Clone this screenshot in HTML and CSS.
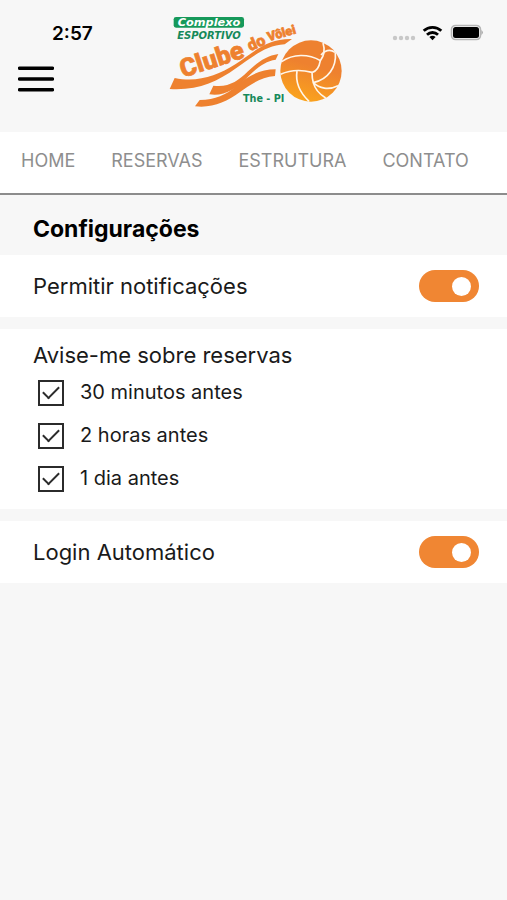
FILE: index.html
```
<!DOCTYPE html>
<html lang="pt-BR">
<head>
    <meta charset="UTF-8">
    <meta name="viewport" content="width=device-width, initial-scale=1.0">
    <title>Configurações</title>
    <link rel="stylesheet" href="styles.css">
</head>
<body>
    <header class="topo">
        <div class="lado">
            <span class="hora">2:57</span>
            <button type="button" class="menu" aria-label="Abrir menu">
                <svg width="36" height="26" viewBox="0 0 36 26">
                    <path d="M1.5 2.2H34.5M1.5 13H34.5M1.5 23.8H34.5" stroke="#000" stroke-width="3.4" stroke-linecap="round"/>
                </svg>
            </button>
        </div>

        <svg class="logo" width="190" height="105" viewBox="-4 0 570 315" role="img" aria-label="Complexo Esportivo Clube do Vôlei">
            <defs>
                <linearGradient id="bola" x1="0.6" y1="0" x2="0.3" y2="1">
                    <stop offset="0.4" stop-color="#ee812f"/>
                    <stop offset="1" stop-color="#fba51c"/>
                </linearGradient>
            </defs>
            <rect x="40" y="21" width="211" height="32" rx="7" fill="#16995a"/>
            <text class="complexo" x="146" y="48" text-anchor="middle">Complexo</text>
            <text class="esportivo" x="146" y="88" text-anchor="middle">ESPORTIVO</text>
            <g class="clube">
                <text x="0" y="0" font-size="76" transform="translate(68 203) rotate(-18)">Clube</text>
                <text x="0" y="0" font-size="48" transform="translate(270 124) rotate(-24)">do</text>
                <text x="0" y="0" font-size="38" transform="translate(325 94) rotate(-16)">Vôlei</text>
            </g>
            <g fill="#ee812f">
                <path d="M43 204C112 218 170 198 225 163C280 126 320 85 395 87L373 103C315 106 275 142 228 174C168 217 112 242 28 237Z"/>
                <path d="M159 227C205 233 232 214 263 184C290 158 318 137 354 132L346 149C312 154 286 176 259 204C226 238 190 260 147 253Z"/>
                <path d="M118 270C166 269 196 255 229 227C263 197 299 178 346 178L344 198C302 201 269 224 238 247C199 276 156 295 104 289Z"/>
            </g>
            <text class="the" x="310" y="276" text-anchor="middle">The - PI</text>
            <circle cx="452" cy="183" r="92" fill="url(#bola)"/>
            <g fill="none" stroke="#fff6ea" stroke-width="5">
                <path d="M488 99C494 118 490 139 480 152C476 174 468 184 456 187"/>
                <path d="M364 155C399 131 443 131 481 152"/>
                <path d="M525 127C529 171 504 208 459 218"/>
                <path d="M482 135C500 115 515 121 524 127"/>
                <path d="M361 193C391 179 427 180 455 187C455 196 456 208 459 218C477 236 505 241 533 227"/>
                <path d="M410 183C405 215 419 248 446 274"/>
                <path d="M459 218C464 238 478 253 496 264"/>
            </g>
        </svg>

        <div class="lado sinais">
            <svg width="92" height="18" viewBox="0 0 92 18" role="img" aria-label="Wi-Fi e bateria">
                <g fill="#c8c8c8">
                    <circle cx="4" cy="14" r="2.2"/>
                    <circle cx="10" cy="14" r="2.2"/>
                    <circle cx="16" cy="14" r="2.2"/>
                    <circle cx="22" cy="14" r="2.2"/>
                </g>
                <g fill="none" stroke="#000" stroke-width="2.8">
                    <path d="M32.7 6.8A13 13 0 0 1 50.3 6.8"/>
                    <path d="M36 10.7A8 8 0 0 1 47 10.7"/>
                </g>
                <path d="M38.4 13.1A4.8 4.8 0 0 1 44.6 13.1L41.5 16.2Z"/>
                <rect x="60.5" y="1.5" width="29" height="14" rx="4" fill="#f7f7f7" stroke="#b5b5b5" stroke-width="1.6"/>
                <rect x="62" y="3" width="26" height="11" rx="2.5"/>
                <path d="M90.5 6Q93 8.5 90.5 11Z" fill="#999"/>
            </svg>
        </div>
    </header>

    <nav class="abas">
        <a href="#home">HOME</a>
        <a href="#reservas">RESERVAS</a>
        <a href="#estrutura">ESTRUTURA</a>
        <a href="#contato">CONTATO</a>
    </nav>

    <main>
        <h1>Configurações</h1>

        <section class="cartao linha">
            <label for="notificacoes">Permitir notificações</label>
            <input type="checkbox" class="chave" id="notificacoes" checked>
        </section>

        <section class="cartao">
            <h2>Avise-me sobre reservas</h2>
            <ul class="avisos">
                <li><input type="checkbox" id="aviso-30" checked><label for="aviso-30">30 minutos antes</label></li>
                <li><input type="checkbox" id="aviso-2h" checked><label for="aviso-2h">2 horas antes</label></li>
                <li><input type="checkbox" id="aviso-1d" checked><label for="aviso-1d">1 dia antes</label></li>
            </ul>
        </section>

        <section class="cartao linha">
            <label for="login">Login Automático</label>
            <input type="checkbox" class="chave" id="login" checked>
        </section>
    </main>
</body>
</html>
```
FILE: styles.css
```
* {
    box-sizing: border-box;
}
body {
    margin: 0;
    font-family: Inter, "Liberation Sans", sans-serif;
    font-size: 22px;
    line-height: 28px;
    color: #1a1a1a;
    background-color: #f7f7f7;
}

/* topo */
.topo {
    display: flex;
    justify-content: space-between;
    height: 132px;
    padding: 10px 18px 0;
}
.lado {
    flex: 1 1 0;
    display: flex;
    flex-direction: column;
    align-items: flex-start;
    gap: 18px;
    padding-top: 10px;
}
.hora {
    padding-left: 34px;
    font-size: 19px;
    font-weight: 600;
    color: #000;
}
.menu {
    padding: 0;
    border: none;
    background: none;
    cursor: pointer;
}
.menu svg,
.logo {
    display: block;
}
.logo {
    flex: none;
}
.sinais {
    align-items: flex-end;
    padding-top: 14px;
}
.sinais svg {
    margin-right: 6px;
}
.complexo,
.esportivo {
    font-family: "DejaVu Sans", sans-serif;
    font-weight: bold;
    font-style: italic;
}
.complexo {
    font-size: 34px;
    fill: #fff;
}
.esportivo {
    font-size: 30px;
    fill: #16895a;
}
.clube {
    font-family: Roboto, sans-serif;
    font-weight: 900;
    fill: #ee812f;
    stroke: #ee812f;
    stroke-width: 2;
}
.the {
    font-family: "DejaVu Sans", sans-serif;
    font-weight: bold;
    font-size: 29px;
    fill: #16895a;
}

/* abas */
.abas {
    display: flex;
    gap: 36px;
    padding: 15px 21px 18px;
    background-color: #fff;
    border-bottom: 2px solid #8c8c8c;
}
.abas a {
    font-size: 18px;
    color: #8e8e8e;
    text-decoration: none;
}

/* configurações */
h1 {
    margin: 0;
    padding: 20px 33px 12px;
    font-size: 23px;
    line-height: 28px;
    font-weight: 700;
    color: #000;
}
.cartao {
    margin-bottom: 12px;
    padding: 12px 28px 17px 33px;
    background-color: #fff;
}
.linha {
    display: flex;
    align-items: center;
    justify-content: space-between;
    padding-top: 15px;
    padding-bottom: 15px;
}
h2 {
    margin: 0;
    font-size: 22px;
    font-weight: 400;
}
.chave {
    appearance: none;
    display: flex;
    align-items: center;
    justify-content: flex-end;
    width: 60px;
    height: 32px;
    margin: 0;
    padding: 0 8px;
    border-radius: 16px;
    background-color: #c8c8c8;
    cursor: pointer;
}
.chave:checked {
    background-color: #f08633;
}
.chave::before {
    content: "";
    width: 19px;
    height: 19px;
    border-radius: 50%;
    background-color: #fff;
}
.chave:not(:checked) {
    justify-content: flex-start;
}
.avisos {
    list-style: none;
    display: grid;
    gap: 17px;
    margin: 11px 0 0;
    padding: 0 0 0 5px;
}
.avisos li {
    display: flex;
    align-items: center;
    gap: 16px;
    font-size: 20px;
    line-height: 24px;
}
.avisos label {
    padding-bottom: 2px;
}
.avisos input {
    appearance: none;
    display: grid;
    place-items: center;
    width: 26px;
    height: 26px;
    margin: 0;
    border: 2px solid #2b2b2b;
    cursor: pointer;
}
.avisos input:checked::before {
    content: "";
    width: 14px;
    height: 7px;
    margin-bottom: 5px;
    border: solid #2b2b2b;
    border-width: 0 0 2px 2px;
    transform: rotate(-45deg);
}
```
